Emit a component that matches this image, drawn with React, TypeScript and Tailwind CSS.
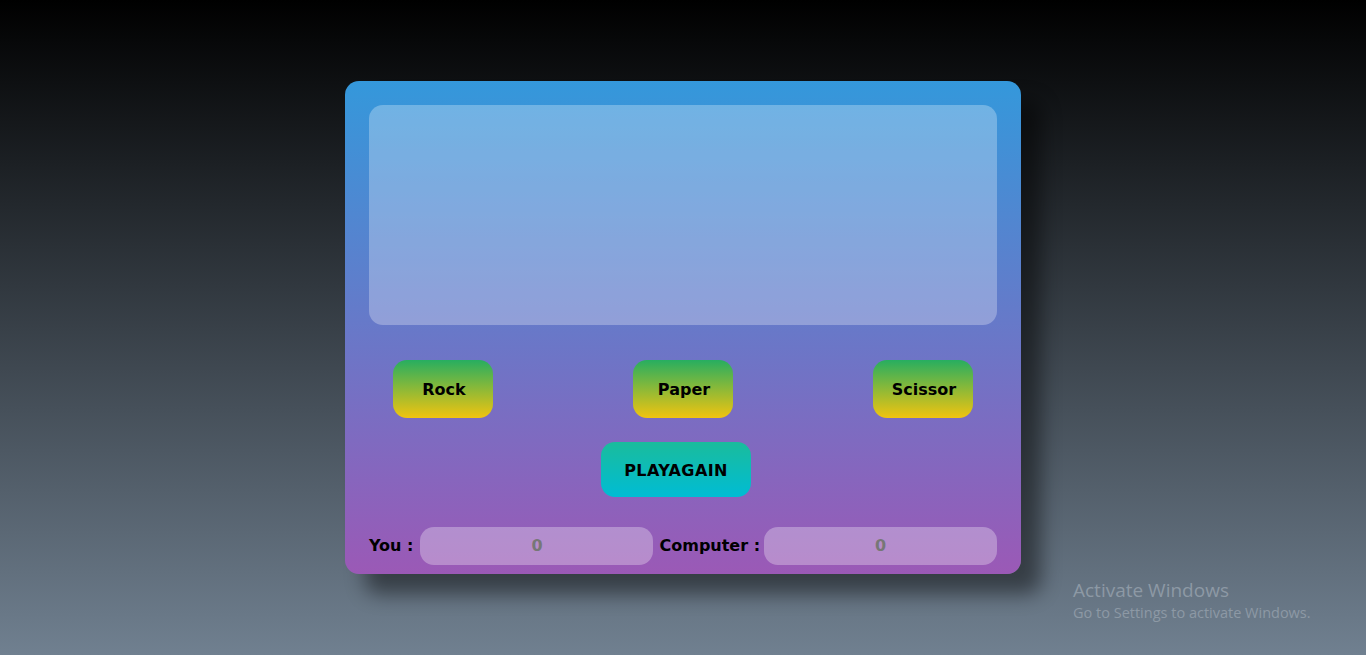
import React from "react";

export default function App() {
  const f = { fontFamily: '"DejaVu Sans", Verdana, sans-serif' };
  return (
    <div className="relative w-[1366px] h-[655px] overflow-hidden bg-linear-to-b/srgb from-[#000000] to-[#708090] flex items-center justify-center" style={f}>
      <div className="w-[676px] h-[493px] rounded-[14px] bg-linear-to-b/srgb from-[#3498db] to-[#9b59b6] shadow-[20px_20px_20px_rgba(0,0,0,0.45)] px-6 pt-6 flex flex-col">
        <div className="h-[220px] rounded-[14px] bg-white/28" />
        <div className="mt-[35px] flex justify-between px-6">
          {["Rock", "Paper", "Scissor"].map((t) => (
            <button key={t} className="w-[100px] h-[58px] rounded-[14px] bg-linear-to-b/srgb from-[#27ae60] to-[#f1c40f] text-[16px] font-bold text-black pt-[2px] pl-[2px]">
              {t}
            </button>
          ))}
        </div>
        <div className="mt-6 flex justify-center pr-[14px]">
          <button className="w-[150px] h-[55px] rounded-[14px] bg-linear-to-b/srgb from-[#1abc9c] to-[#00bcd4] text-[16px] font-bold text-black tracking-[0.4px] pt-[2px]">
            PLAYAGAIN
          </button>
        </div>
        <div className="mt-[30px] flex items-center h-[38px]">
          <span className="text-[16px] font-bold text-black mr-[7px] whitespace-nowrap">You :</span>
          <div className="w-[233px] h-[38px] rounded-[14px] bg-white/30 flex items-center justify-center text-[16px] font-bold text-[#777]">0</div>
          <span className="text-[16px] font-bold text-black ml-[6px] mr-[4px] whitespace-nowrap">Computer :</span>
          <div className="flex-1 h-[38px] rounded-[14px] bg-white/30 flex items-center justify-center text-[16px] font-bold text-[#777]">0</div>
        </div>
      </div>
      <div className="absolute left-[1073px] top-[577px] text-[#8d99a5]" style={{ fontFamily: '"Open Sans", "Noto Sans", sans-serif' }}>
        <div className="text-[19px] leading-[26px]">Activate Windows</div>
        <div className="text-[14.5px] leading-[20px]">Go to Settings to activate Windows.</div>
      </div>
    </div>
  );
}
